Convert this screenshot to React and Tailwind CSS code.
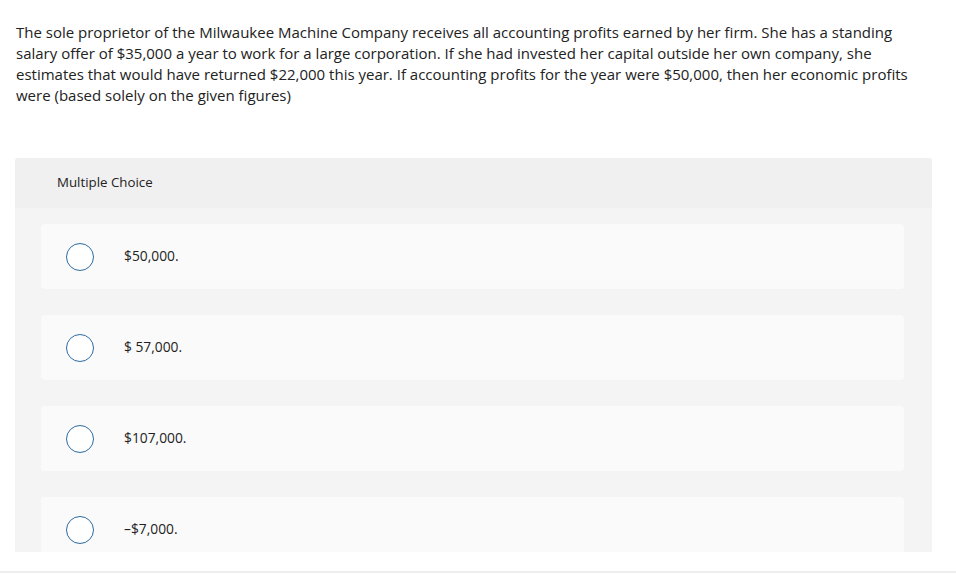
import React from "react";

const options = ["$50,000.", "$ 57,000.", "$107,000.", "–$7,000."];

const Option = ({ label }) => (
    <div className="flex items-center h-[65px] bg-[#fafafa] rounded-[4px] pl-[25px]">
        <span className="w-[28px] h-[28px] rounded-full border border-[#2c6aa0] bg-white shrink-0"></span>
        <span className="ml-[30px] text-[13.8px] text-[#222]">{label}</span>
    </div>
);

const App = () => {
    return (
        <div className="w-[956px] h-[574px] bg-white overflow-hidden font-['Open_Sans','Lato',sans-serif] text-[#222]">
            <p className="pt-[22px] pl-[16px] pr-[10px] text-[15px] leading-[21px] whitespace-nowrap">
                The sole proprietor of the Milwaukee Machine Company receives all accounting profits earned by her firm. She has a standing
                <br />
                salary offer of $35,000 a year to work for a large corporation. If she had invested her capital outside her own company, she
                <br />
                estimates that would have returned $22,000 this year. If accounting profits for the year were $50,000, then her economic profits
                <br />
                were (based solely on the given figures)
            </p>

            <div className="mt-[52px] ml-[15px] w-[917px] h-[394px] overflow-hidden rounded-t-[3px] bg-[#f4f4f4]">
                <div className="h-[50px] bg-[#f0f0f0] flex items-center pl-[42px] text-[13.3px]">
                    Multiple Choice
                </div>
                <div className="flex flex-col gap-[26px] pt-[16px] pl-[26px] pr-[28px]">
                    {options.map((o) => (
                        <Option key={o} label={o} />
                    ))}
                </div>
            </div>

            <div className="mt-[19px] h-[2px] bg-[#eeeeee]"></div>
        </div>
    );
};

export default App;
